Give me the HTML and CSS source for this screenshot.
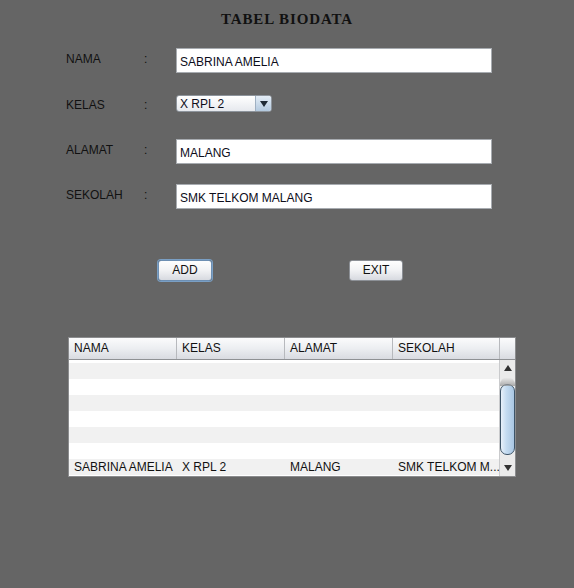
FILE: index.html
```html
<!DOCTYPE html>
<html>
<head>
<meta charset="utf-8">
<link rel="stylesheet" href="styles.css">
</head>
<body>
<div class="frame">
  <h1 class="title">TABEL BIODATA</h1>

  <div class="row row-1">
    <span class="label">NAMA</span><span class="colon">:</span>
    <div class="field">SABRINA AMELIA</div>
  </div>
  <div class="row row-2">
    <span class="label">KELAS</span><span class="colon">:</span>
    <div class="combo">
      <span class="combo-text">X RPL 2</span>
      <span class="combo-btn"><svg width="8" height="6" viewBox="0 0 8 6"><path d="M0 0H8L4 6Z" fill="#1f2a35"/></svg></span>
    </div>
  </div>
  <div class="row row-3">
    <span class="label">ALAMAT</span><span class="colon">:</span>
    <div class="field">MALANG</div>
  </div>
  <div class="row row-4">
    <span class="label">SEKOLAH</span><span class="colon">:</span>
    <div class="field">SMK TELKOM MALANG</div>
  </div>

  <div class="buttons">
    <button class="btn btn-focus">ADD</button>
    <button class="btn">EXIT</button>
  </div>

  <div class="table">
    <div class="thead">
      <div class="th">NAMA</div>
      <div class="th">KELAS</div>
      <div class="th">ALAMAT</div>
      <div class="th th-last">SEKOLAH</div>
      <div class="th-corner"></div>
    </div>
    <div class="tbody">
      <div class="rows">
        <div class="tr tr-partial"></div>
        <div class="tr odd"></div>
        <div class="tr"></div>
        <div class="tr odd"></div>
        <div class="tr"></div>
        <div class="tr odd"></div>
        <div class="tr"></div>
        <div class="tr odd">
          <div class="td">SABRINA AMELIA</div>
          <div class="td">X RPL 2</div>
          <div class="td">MALANG</div>
          <div class="td">SMK TELKOM M...</div>
        </div>
      </div>
      <div class="scrollbar">
        <div class="sb-arrow"><svg width="8" height="6" viewBox="0 0 8 6"><path d="M4 0L8 6H0Z" fill="#333"/></svg></div>
        <div class="sb-track">
          <div class="sb-shadow"></div>
          <div class="sb-thumb"></div>
        </div>
        <div class="sb-arrow"><svg width="8" height="6" viewBox="0 0 8 6"><path d="M0 0H8L4 6Z" fill="#333"/></svg></div>
      </div>
    </div>
  </div>
</div>
</body>
</html>
```

FILE: styles.css
```css
html, body {
  margin: 0;
  padding: 0;
}
body {
  background: #656565;
  width: 574px;
  height: 588px;
  overflow: hidden;
  font-family: "Liberation Sans", Arial, sans-serif;
  font-size: 12px;
  color: #111;
}
.frame {
  display: flex;
  flex-direction: column;
}
.title {
  margin: 0;
  padding-top: 11px;
  height: 17px;
  line-height: 17px;
  text-align: center;
  font-family: "Liberation Serif", "Times New Roman", serif;
  font-weight: bold;
  font-size: 15px;
  letter-spacing: 0.9px;
  color: #111;
}
.row {
  display: grid;
  grid-template-columns: 78px 32px 316px;
  padding-left: 66px;
  align-items: start;
}
.row-1 { margin-top: 20px; }
.row-2 { margin-top: 22px; }
.row-3 { margin-top: 27px; }
.row-4 { margin-top: 20px; }
.label, .colon {
  line-height: 14px;
  padding-top: 4px;
}
.row-2 .label, .row-2 .colon { padding-top: 3px; }
.field {
  box-sizing: border-box;
  height: 25px;
  border: 1px solid #a7abb0;
  background: #fff;
  padding: 1px 3px 0;
  line-height: 24px;
  color: #0d0d1a;
}
.combo {
  box-sizing: border-box;
  width: 96px;
  height: 17px;
  border: 1px solid #8d949c;
  border-radius: 3px;
  background: linear-gradient(#ffffff, #e6e9ee);
  display: flex;
  align-items: center;
  justify-content: space-between;
  overflow: hidden;
}
.combo-text {
  padding-left: 3px;
  padding-top: 1px;
  line-height: 15px;
  color: #0d0d1a;
}
.combo-btn {
  box-sizing: border-box;
  width: 16px;
  height: 15px;
  border-left: 1px solid #9fb0c2;
  background: linear-gradient(#e4edf6, #b3c9df);
  display: flex;
  align-items: center;
  justify-content: center;
  border-radius: 0 2px 2px 0;
}
.buttons {
  display: flex;
  gap: 137px;
  padding-left: 158px;
  margin-top: 51px;
}
.btn {
  box-sizing: border-box;
  width: 54px;
  height: 21px;
  padding: 0;
  border: 1px solid #8c9096;
  border-radius: 3px;
  background: linear-gradient(#fefefe, #f1f2f4 50%, #d7dae0);
  font-family: "Liberation Sans", Arial, sans-serif;
  font-size: 12px;
  color: #111;
  line-height: 19px;
}
.btn-focus {
  box-shadow: 0 0 0 1px #7a9fc4;
  border-color: #6d8fb3;
}
.table {
  box-sizing: border-box;
  margin-top: 56px;
  margin-left: 68px;
  width: 448px;
  height: 140px;
  border: 1px solid #8b8c8e;
  background: #fff;
  display: flex;
  flex-direction: column;
  overflow: hidden;
}
.thead {
  display: flex;
  height: 21px;
  border-bottom: 1px solid #8f9194;
  background: linear-gradient(#fbfbfc, #eceef1 50%, #d9dbe1);
  flex: none;
}
.th {
  box-sizing: border-box;
  width: 108px;
  padding-left: 5px;
  line-height: 21px;
  border-right: 1px solid #b7b9bd;
}
.th-last { width: 107px; }
.th-corner { flex: 1; }
.tbody {
  display: flex;
  flex: 1;
  overflow: hidden;
}
.rows {
  width: 430px;
  margin-top: -13px;
}
.tr {
  height: 16px;
  display: grid;
  grid-template-columns: 108px 108px 108px 106px;
  background: #fff;
}
.tr.odd { background: #f1f1f1; }
.td {
  padding-left: 5px;
  line-height: 16px;
  white-space: nowrap;
  overflow: hidden;
}
.scrollbar {
  box-sizing: border-box;
  width: 16px;
  border-left: 1px solid #c9cacc;
  background: #ebebeb;
  display: flex;
  flex-direction: column;
}
.sb-arrow {
  height: 16px;
  display: flex;
  align-items: center;
  justify-content: center;
  flex: none;
}
.sb-track {
  flex: 1;
}
.sb-shadow {
  height: 9px;
  margin-top: 1px;
  border-radius: 8px 8px 0 0;
  background: linear-gradient(#f0f0f0, #8d8d8d);
  opacity: 0.7;
}
.sb-thumb {
  box-sizing: border-box;
  height: 71px;
  margin-top: -2px;
  border: 1px solid #3d5468;
  border-radius: 7px;
  background: linear-gradient(90deg, #e8f1fa, #c5dcf1 40%, #a9c6e2);
}
```
